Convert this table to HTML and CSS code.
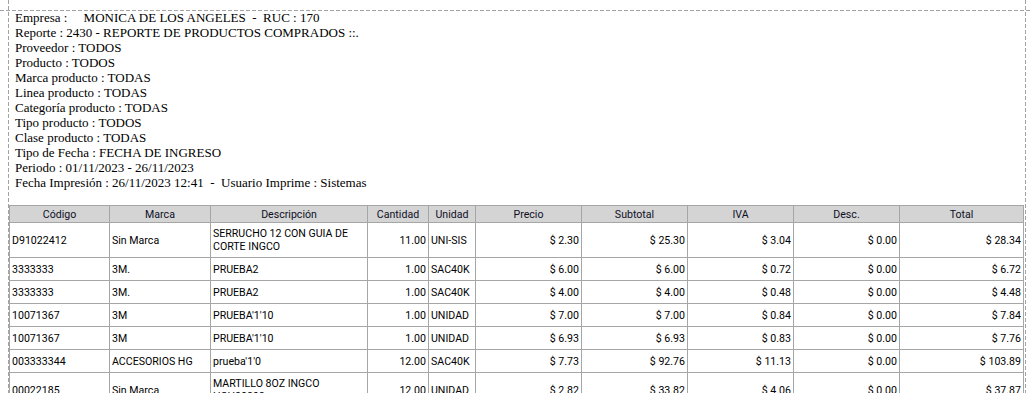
FILE: index.html
```html
<!DOCTYPE html>
<html lang="es">
<head>
<meta charset="utf-8">
<title>Reporte de productos comprados</title>
<link rel="stylesheet" href="styles.css">
</head>
<body>
<div class="viewport">
  <div class="sheet">
    <div class="topgap"></div>
    <div class="hline"></div>
    <div class="report-head">
      <div>Empresa :&nbsp;&nbsp;&nbsp;&nbsp; MONICA DE LOS ANGELES&nbsp; -&nbsp; RUC : 170</div>
      <div>Reporte : 2430 - REPORTE DE PRODUCTOS COMPRADOS ::.</div>
      <div>Proveedor : TODOS</div>
      <div>Producto : TODOS</div>
      <div>Marca producto : TODAS</div>
      <div>Linea producto : TODAS</div>
      <div>Categoría producto : TODAS</div>
      <div>Tipo producto : TODOS</div>
      <div>Clase producto : TODAS</div>
      <div>Tipo de Fecha : FECHA DE INGRESO</div>
      <div>Periodo : 01/11/2023 - 26/11/2023</div>
      <div>Fecha Impresión : 26/11/2023 12:41&nbsp; -&nbsp; Usuario Imprime : Sistemas</div>
    </div>
    <table class="grid">
      <colgroup>
        <col class="c-cod"><col class="c-mar"><col class="c-des"><col class="c-can"><col class="c-uni">
        <col class="c-pre"><col class="c-sub"><col class="c-iva"><col class="c-dsc"><col class="c-tot">
      </colgroup>
      <thead>
        <tr>
          <th>Código</th><th>Marca</th><th>Descripción</th><th>Cantidad</th><th>Unidad</th>
          <th>Precio</th><th>Subtotal</th><th>IVA</th><th>Desc.</th><th>Total</th>
        </tr>
      </thead>
      <tbody>
        <tr class="tall">
          <td>D91022412</td><td>Sin Marca</td><td>SERRUCHO 12 CON GUIA DE<br>CORTE INGCO</td><td class="num">11.00</td><td>UNI-SIS</td>
          <td class="num">$ 2.30</td><td class="num">$ 25.30</td><td class="num">$ 3.04</td><td class="num">$ 0.00</td><td class="num">$ 28.34</td>
        </tr>
        <tr>
          <td>3333333</td><td>3M.</td><td>PRUEBA2</td><td class="num">1.00</td><td>SAC40K</td>
          <td class="num">$ 6.00</td><td class="num">$ 6.00</td><td class="num">$ 0.72</td><td class="num">$ 0.00</td><td class="num">$ 6.72</td>
        </tr>
        <tr>
          <td>3333333</td><td>3M.</td><td>PRUEBA2</td><td class="num">1.00</td><td>SAC40K</td>
          <td class="num">$ 4.00</td><td class="num">$ 4.00</td><td class="num">$ 0.48</td><td class="num">$ 0.00</td><td class="num">$ 4.48</td>
        </tr>
        <tr>
          <td>10071367</td><td>3M</td><td>PRUEBA'1'10</td><td class="num">1.00</td><td>UNIDAD</td>
          <td class="num">$ 7.00</td><td class="num">$ 7.00</td><td class="num">$ 0.84</td><td class="num">$ 0.00</td><td class="num">$ 7.84</td>
        </tr>
        <tr>
          <td>10071367</td><td>3M</td><td>PRUEBA'1'10</td><td class="num">1.00</td><td>UNIDAD</td>
          <td class="num">$ 6.93</td><td class="num">$ 6.93</td><td class="num">$ 0.83</td><td class="num">$ 0.00</td><td class="num">$ 7.76</td>
        </tr>
        <tr>
          <td>003333344</td><td>ACCESORIOS HG</td><td>prueba'1'0</td><td class="num">12.00</td><td>SAC40K</td>
          <td class="num">$ 7.73</td><td class="num">$ 92.76</td><td class="num">$ 11.13</td><td class="num">$ 0.00</td><td class="num">$ 103.89</td>
        </tr>
        <tr class="tall">
          <td>00022185</td><td>Sin Marca</td><td>MARTILLO 8OZ INGCO<br>HCH80808</td><td class="num">12.00</td><td>UNIDAD</td>
          <td class="num">$ 2.82</td><td class="num">$ 33.82</td><td class="num">$ 4.06</td><td class="num">$ 0.00</td><td class="num">$ 37.87</td>
        </tr>
      </tbody>
    </table>
  </div>
</div>
</body>
</html>
```
FILE: styles.css
```css
html, body {
  margin: 0;
  padding: 0;
  background: #ffffff;
  overflow: hidden;
}

.viewport {
  height: 393px;
  overflow: hidden;
}

.sheet {
  margin-left: 8px;
  width: 1018px;
  height: 100%;
  background:
    repeating-linear-gradient(to bottom, #a3a3a3 0 4px, transparent 4px 6px) left top / 1px 100% no-repeat,
    repeating-linear-gradient(to bottom, #a3a3a3 0 4px, transparent 4px 6px) right top / 1px 100% no-repeat;
}

.topgap {
  height: 10px;
}

.hline {
  height: 1px;
  margin: 0 -4px 0 -8px;
  background: repeating-linear-gradient(to right, #a3a3a3 0 4px, transparent 4px 6px);
}

.report-head {
  margin-top: -1px;
  padding-left: 7px;
  font-family: "Liberation Serif", "Times New Roman", serif;
  font-size: 13px;
  line-height: 15px;
  color: #000000;
  white-space: nowrap;
}

.grid {
  margin-top: 15px;
  margin-left: 1px;
  width: 1015px;
  table-layout: fixed;
  border-collapse: collapse;
  font-family: Roboto, "Liberation Sans", sans-serif;
  font-size: 10.6px;
  line-height: 13px;
  color: #000000;
}

.c-cod { width: 100px; }
.c-mar { width: 101px; }
.c-des { width: 157px; }
.c-can { width: 61px; }
.c-uni { width: 47px; }
.c-pre { width: 106px; }
.c-sub { width: 106px; }
.c-iva { width: 106px; }
.c-dsc { width: 106px; }
.c-tot { width: 124px; }

.grid th,
.grid td {
  border: 1px solid #a6a6a6;
  padding: 0 2px;
  white-space: nowrap;
  overflow: hidden;
  vertical-align: middle;
}

.grid th {
  height: 16px;
  background: #d4d4d4;
  font-weight: normal;
  text-align: center;
  color: #0f0f26;
}

.grid td {
  height: 22px;
  text-align: left;
}

.grid tr.tall td {
  height: 34px;
}

.grid td.num {
  text-align: right;
}
```
